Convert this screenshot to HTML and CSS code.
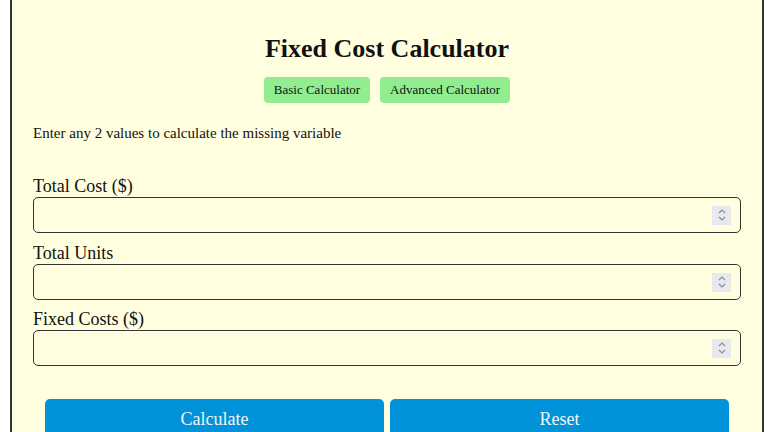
FILE: index.html
```html
<!DOCTYPE html>
<html>
<head>
<meta charset="utf-8">
<link rel="stylesheet" href="styles.css">
</head>
<body>
<div class="calc">
  <h1 class="title">Fixed Cost Calculator</h1>
  <div class="tabs">
    <button class="tab">Basic Calculator</button>
    <button class="tab">Advanced Calculator</button>
  </div>
  <p class="intro">Enter any 2 values to calculate the missing variable</p>
  <div class="fields">
    <div class="field">
      <label class="label">Total Cost ($)</label>
      <div class="box">
        <input class="num" type="text">
        <span class="spin"><svg width="10" height="14" viewBox="0 0 10 14"><path d="M2 5 L5 2 L8 5 M2 9 L5 12 L8 9" fill="none" stroke="#8c8c9c" stroke-width="1.2"/></svg></span>
      </div>
    </div>
    <div class="field">
      <label class="label">Total Units</label>
      <div class="box">
        <input class="num" type="text">
        <span class="spin"><svg width="10" height="14" viewBox="0 0 10 14"><path d="M2 5 L5 2 L8 5 M2 9 L5 12 L8 9" fill="none" stroke="#8c8c9c" stroke-width="1.2"/></svg></span>
      </div>
    </div>
    <div class="field">
      <label class="label">Fixed Costs ($)</label>
      <div class="box">
        <input class="num" type="text">
        <span class="spin"><svg width="10" height="14" viewBox="0 0 10 14"><path d="M2 5 L5 2 L8 5 M2 9 L5 12 L8 9" fill="none" stroke="#8c8c9c" stroke-width="1.2"/></svg></span>
      </div>
    </div>
  </div>
  <div class="actions">
    <button class="action">Calculate</button>
    <button class="action">Reset</button>
  </div>
</div>
</body>
</html>
```
FILE: styles.css
```css
html, body {
  margin: 0;
  padding: 0;
  background: #ffffff;
}
body {
  padding-left: 10px;
  font-family: "Liberation Serif", "Times New Roman", serif;
  color: #111;
}
.calc {
  box-sizing: border-box;
  width: 754px;
  min-height: 480px;
  background: #ffffe0;
  border-left: 2px solid #333;
  border-right: 2px solid #333;
  padding: 34px 21px 0 21px;
}
.title {
  margin: 0;
  font-size: 26px;
  line-height: 30px;
  font-weight: bold;
  text-align: center;
}
.tabs {
  display: flex;
  justify-content: center;
  gap: 10px;
  margin-top: 13px;
}
.tab {
  height: 26px;
  padding: 0 10px;
  border: none;
  border-radius: 4px;
  background: #90ee90;
  font-family: "Liberation Serif", "Times New Roman", serif;
  font-size: 13px;
  color: #111;
}
.intro {
  margin: 21px 0 0 0;
  font-size: 15px;
  line-height: 18px;
}
.fields {
  margin-top: 34px;
  display: flex;
  flex-direction: column;
  gap: 10px;
}
.field {
  display: flex;
  flex-direction: column;
}
.field + .field + .field {
  margin-top: -1px;
}
.label {
  font-size: 18px;
  line-height: 21px;
}
.box {
  box-sizing: border-box;
  height: 36px;
  border: 1px solid #333;
  border-radius: 5px;
  display: flex;
  align-items: center;
  padding: 0 9px 0 6px;
}
.num {
  flex: 1;
  border: none;
  background: transparent;
  outline: none;
  font-size: 16px;
}
.spin {
  width: 19px;
  height: 19px;
  background: #e8e8ef;
  display: flex;
  align-items: center;
  justify-content: center;
}
.actions {
  display: flex;
  gap: 6px;
  padding: 0 12px;
  margin-top: 33px;
}
.action {
  flex: 1;
  height: 40px;
  border: none;
  border-radius: 5px;
  background: #0093d9;
  color: #f4f4f4;
  font-family: "Liberation Serif", "Times New Roman", serif;
  font-size: 18px;
  padding: 0;
}
```
